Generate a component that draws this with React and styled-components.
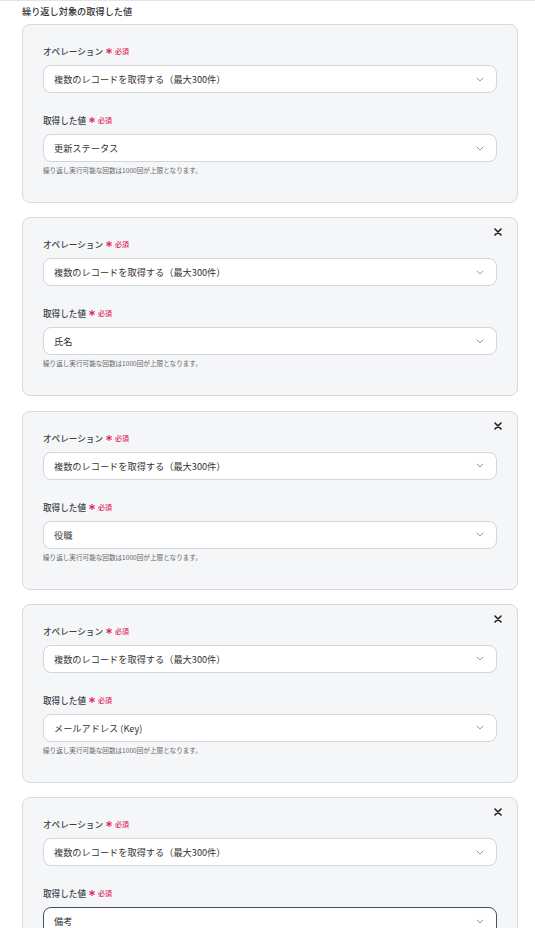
import React from "react";
import styled, { createGlobalStyle } from "styled-components";

const GlobalStyle = createGlobalStyle`
  html, body {
    margin: 0;
    padding: 0;
    background: #ffffff;
  }
  body {
    font-family: "Noto Sans CJK JP", "Noto Sans", sans-serif;
    color: #333;
  }
  * { box-sizing: border-box; }
`;

const Page = styled.div`
  border-top: 1px solid #e3e5e8;
  padding: 3px 17px 40px 22px;
`;

const SectionTitle = styled.div`
  font-size: 9.2px;
  line-height: 14px;
  font-weight: 500;
  color: #333;
  margin-bottom: 6px;
`;

const CardList = styled.div`
  display: flex;
  flex-direction: column;
  gap: 14.25px;
`;

const Card = styled.div`
  position: relative;
  background: #f5f6f8;
  border: 1px solid #d6d9de;
  border-radius: 8px;
  padding: 19px 20px 27px 20px;
  display: flex;
  flex-direction: column;
  gap: 20px;
`;

const RemoveButton = styled.button`
  position: absolute;
  top: 8px;
  right: 13px;
  width: 12px;
  height: 12px;
  padding: 0;
  border: none;
  background: transparent;
  display: flex;
  align-items: center;
  justify-content: center;
  cursor: pointer;
`;

const Field = styled.div`
  display: flex;
  flex-direction: column;
`;

const Label = styled.div`
  display: flex;
  align-items: center;
  font-size: 8.6px;
  line-height: 14px;
  font-weight: 500;
  color: #3a3f47;
  margin-bottom: 7px;
`;

const Asterisk = styled.span`
  display: inline-flex;
  align-items: center;
  margin-left: 3px;
  margin-right: 1px;
  height: 14px;
`;

const Required = styled.span`
  color: #e3245c;
  font-size: 7px;
  margin-left: 2px;
  line-height: 14px;
`;

const Select = styled.div`
  height: 28px;
  background: #fff;
  border: 1px solid ${(p) => (p.$focused ? "#4a5260" : "#d2d6dc")};
  border-radius: 8px;
  padding: 0 12px 0 10px;
  display: flex;
  align-items: center;
  justify-content: space-between;
  font-size: 9.2px;
  color: #333;
`;

const Hint = styled.div`
  margin-top: 3px;
  font-size: 6.6px;
  line-height: 10px;
  color: #666;
`;

const Chevron = () => (
  <svg width="8" height="5" viewBox="0 0 8 5" fill="none">
    <path d="M1 1l3 3 3-3" stroke="#8a8f98" strokeWidth="0.9" strokeLinecap="round" strokeLinejoin="round" />
  </svg>
);

const CloseIcon = () => (
  <svg width="8" height="8" viewBox="0 0 8 8" fill="none">
    <path d="M1 1l6 6M7 1l-6 6" stroke="#1f1f1f" strokeWidth="1.6" strokeLinecap="round" />
  </svg>
);

// six-spoke required marker
const StarMark = () => (
  <svg width="6" height="6" viewBox="0 0 6 6" fill="none">
    <path
      d="M3 0.4v5.2M0.75 1.7l4.5 2.6M0.75 4.3l4.5-2.6"
      stroke="#e3245c"
      strokeWidth="1.1"
      strokeLinecap="round"
    />
  </svg>
);

const FieldLabel = ({ children }) => (
  <Label>
    {children}
    <Asterisk>
      <StarMark />
    </Asterisk>
    <Required>必須</Required>
  </Label>
);

const items = [
  { value: "更新ステータス", removable: false },
  { value: "氏名", removable: true },
  { value: "役職", removable: true },
  { value: "メールアドレス (Key)", removable: true },
  { value: "備考", removable: true, focused: true },
];

export default function App() {
  return (
    <>
      <GlobalStyle />
      <Page>
        <SectionTitle>繰り返し対象の取得した値</SectionTitle>
        <CardList>
          {items.map((item, i) => (
            <Card key={i}>
              {item.removable && (
                <RemoveButton aria-label="削除">
                  <CloseIcon />
                </RemoveButton>
              )}
              <Field>
                <FieldLabel>オペレーション</FieldLabel>
                <Select>
                  <span>複数のレコードを取得する（最大300件）</span>
                  <Chevron />
                </Select>
              </Field>
              <Field>
                <FieldLabel>取得した値</FieldLabel>
                <Select $focused={item.focused}>
                  <span>{item.value}</span>
                  <Chevron />
                </Select>
                <Hint>繰り返し実行可能な回数は1000回が上限となります。</Hint>
              </Field>
            </Card>
          ))}
        </CardList>
      </Page>
    </>
  );
}
